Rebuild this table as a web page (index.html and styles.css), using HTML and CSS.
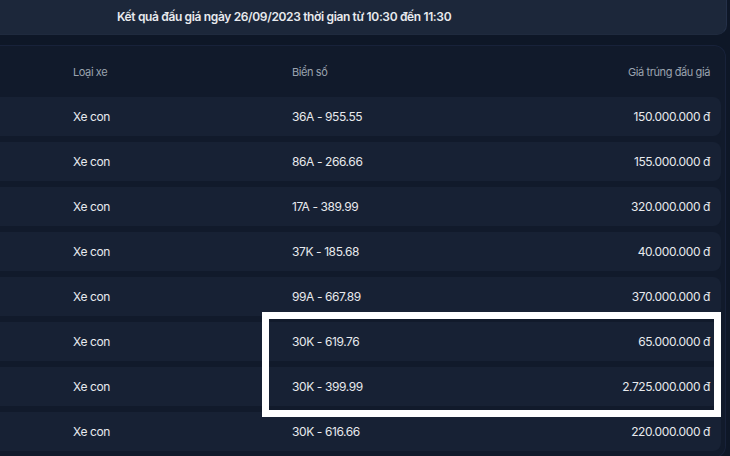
FILE: index.html
```html
<!DOCTYPE html>
<html lang="vi">
<head>
    <meta charset="UTF-8">
    <meta name="viewport" content="width=device-width, initial-scale=1.0">
    <title>Kết quả đấu giá</title>
    <link rel="stylesheet" href="styles.css">
</head>
<body>
    <div class="page">
        <div class="result-title">Kết quả đấu giá ngày 26/09/2023 thời gian từ 10:30 đến 11:30</div>

        <div class="result-table">
            <div class="row head">
                <div>Loại xe</div>
                <div>Biển số</div>
                <div class="price">Giá trúng đấu giá</div>
            </div>
            <div class="row item">
                <div>Xe con</div>
                <div>36A - 955.55</div>
                <div class="price">150.000.000 đ</div>
            </div>
            <div class="row item">
                <div>Xe con</div>
                <div>86A - 266.66</div>
                <div class="price">155.000.000 đ</div>
            </div>
            <div class="row item">
                <div>Xe con</div>
                <div>17A - 389.99</div>
                <div class="price">320.000.000 đ</div>
            </div>
            <div class="row item">
                <div>Xe con</div>
                <div>37K - 185.68</div>
                <div class="price">40.000.000 đ</div>
            </div>
            <div class="row item">
                <div>Xe con</div>
                <div>99A - 667.89</div>
                <div class="price">370.000.000 đ</div>
            </div>
            <div class="row item">
                <div>Xe con</div>
                <div>30K - 619.76</div>
                <div class="price">65.000.000 đ</div>
            </div>
            <div class="row item">
                <div>Xe con</div>
                <div>30K - 399.99</div>
                <div class="price">2.725.000.000 đ</div>
            </div>
            <div class="row item">
                <div>Xe con</div>
                <div>30K - 616.66</div>
                <div class="price">220.000.000 đ</div>
            </div>

            <div class="highlight"></div>
        </div>
    </div>
</body>
</html>
```

FILE: styles.css
```css
:root {
    --bg-color: #0e1727;
    --bar-bg: #1c273a;
    --card-bg: #111a2b;
    --row-bg: #172134;
    --text-color: #e8eaee;
    --muted-color: #9ba3af;
}

* {
    margin: 0;
    padding: 0;
    box-sizing: border-box;
}

body {
    background: var(--bg-color);
    color: var(--text-color);
    font-family: Inter, 'Noto Sans', sans-serif;
    width: 730px;
    height: 456px;
    overflow: hidden;
}

.page {
    width: 727px;
}

.result-title {
    background: var(--bar-bg);
    height: 35px;
    padding: 9px 0 0 117px;
    font-size: 12px;
    font-weight: 600;
    letter-spacing: -0.35px;
    border-bottom-right-radius: 10px;
    border-right: 1px solid #243048;
    border-bottom: 1px solid #1f2a3e;
}

.result-table {
    position: relative;
    margin-top: 10px;
    width: 726px;
    background: var(--card-bg);
    border: 1px solid #18223a;
    border-left: none;
    border-radius: 0 12px 12px 0;
    padding: 0 4px 6px 0;
    display: flex;
    flex-direction: column;
    gap: 6px;
}

.row {
    display: grid;
    grid-template-columns: 219px 1fr auto;
    align-items: center;
    padding: 0 11px 0 73px;
    font-size: 12px;
    letter-spacing: -0.4px;
}

.row.head {
    height: 45px;
    color: var(--muted-color);
    font-size: 11px;
    padding-top: 6px;
}

.row.item {
    height: 39px;
    background: var(--row-bg);
    border-radius: 0 8px 8px 0;
}

.row .price {
    text-align: right;
}

.highlight {
    position: absolute;
    left: 262px;
    top: 266px;
    width: 459px;
    height: 105px;
    border: 7px solid #ffffff;
}
```
